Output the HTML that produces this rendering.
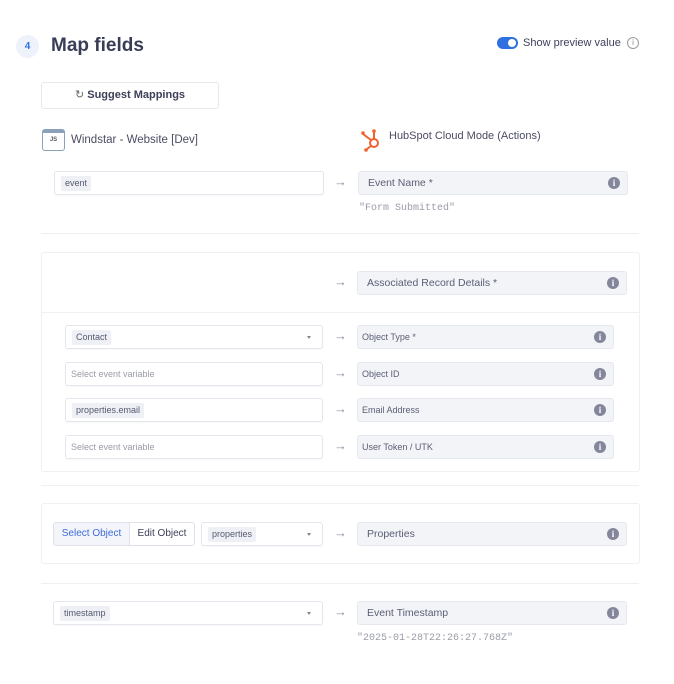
<!DOCTYPE html>
<html><head><style>
*{box-sizing:border-box;margin:0;padding:0}
body{width:674px;height:684px;background:#fff;font-family:"Liberation Sans",sans-serif;color:#3d3f5a;position:relative;overflow:hidden}
.a{position:absolute}
.in{position:absolute;height:24px;border:1px solid #e4e6ed;border-radius:3px;background:#fff;box-shadow:0 1px 1px rgba(0,0,0,.03)}
.tag{position:absolute;left:6px;top:4px;height:15px;line-height:15px;padding:0 4px;background:#eef0f5;border-radius:2px;font-size:9px;color:#555a70}
.ph{position:absolute;left:5px;top:0;line-height:22px;font-size:9px;color:#999ca8}
.rf{position:absolute;height:24px;border:1px solid #e6e8ef;border-radius:3px;background:#f3f4f8;font-size:10.5px;color:#5a5e74;line-height:22px;padding-left:9px}
.rf.s{font-size:9px;padding-left:4px}
.i{position:absolute;right:7px;top:5px;width:12px;height:12px;border-radius:50%;background:#84879b;color:#fff;font-size:9px;font-weight:bold;line-height:12px;text-align:center;font-family:"Liberation Serif",serif}
.ar{position:absolute;font-size:13px;color:#8d90a5;line-height:14px}
.dd{position:absolute;right:11px;top:10px;width:0;height:0;border-left:2.5px solid transparent;border-right:2.5px solid transparent;border-top:3px solid #888}
.hr{position:absolute;left:41px;width:598px;height:1px;background:#eef0f3}
.box{position:absolute;left:41px;width:599px;border:1px solid #eef0f4;border-radius:3px}
.mono{position:absolute;font-family:"Liberation Mono",monospace;font-size:10px;color:#9a9ca8}
</style></head><body>
<div class="a" style="left:16px;top:35px;width:23px;height:23px;border-radius:50%;background:#eef2fb;color:#2f6fe0;font-size:10px;font-weight:bold;text-align:center;line-height:23px">4</div>
<div class="a" style="left:51px;top:35px;font-size:19px;font-weight:bold;color:#3a3d57">Map fields</div>
<div class="a" style="left:497px;top:37px;width:21px;height:12px;border-radius:6px;background:#2f6fe0"><div class="a" style="right:2px;top:2px;width:8px;height:8px;border-radius:50%;background:#fff"></div></div>
<div class="a" style="left:523px;top:37px;font-size:11px;color:#3d3f5a">Show preview value</div>
<div class="a" style="left:627px;top:37px;width:12px;height:12px;border:1px solid #999;border-radius:50%;font-size:8px;color:#888;text-align:center;line-height:10px">i</div>

<div class="a" style="left:41px;top:82px;width:178px;height:27px;border:1px solid #e6e8ee;border-radius:3px;font-size:11px;font-weight:bold;text-align:center;line-height:25px;color:#3d3f5a"><span style="font-weight:normal;color:#666">&#x21BB;</span> Suggest Mappings</div>

<div class="a" style="left:42px;top:129px;width:23px;height:22px;border:1.5px solid #8aa0bb;border-radius:3px;border-top-width:4px;font-size:6px;font-weight:bold;color:#556;text-align:center;line-height:15px">JS</div>
<div class="a" style="left:71px;top:134px;font-size:11.5px;color:#4a4d62">Windstar - Website [Dev]</div>
<svg class="a" style="left:360px;top:127px" width="24" height="25" viewBox="0 0 24 25"><g stroke="#f2622e" stroke-width="2" fill="none"><circle cx="14" cy="16" r="4"/><line x1="14" y1="12" x2="14" y2="5"/><line x1="11" y1="13" x2="3" y2="7"/><line x1="11" y1="19" x2="7" y2="22"/></g><circle cx="14" cy="4" r="1.8" fill="#f2622e"/><circle cx="3" cy="6" r="1.8" fill="#f2622e"/><circle cx="6" cy="23" r="1.8" fill="#f2622e"/></svg>
<div class="a" style="left:389px;top:130px;font-size:11px;color:#4a4d62">HubSpot Cloud Mode (Actions)</div>

<div class="in" style="left:54px;top:171px;width:270px"><span class="tag">event</span></div>
<div class="ar" style="left:334px;top:175px">&#x2192;</div>
<div class="rf" style="left:358px;top:171px;width:270px">Event Name *<span class="i">i</span></div>
<div class="mono" style="left:359px;top:203px">"Form Submitted"</div>

<div class="hr" style="top:233px"></div>
<div class="box" style="top:252px;height:220px"></div>
<div class="hr" style="top:312px;left:42px;width:597px"></div>
<div class="ar" style="left:334px;top:275px">&#x2192;</div>
<div class="rf" style="left:357px;top:271px;width:270px">Associated Record Details *<span class="i">i</span></div>

<div class="in" style="left:65px;top:325px;width:258px"><span class="tag">Contact</span><span class="dd"></span></div>
<div class="ar" style="left:334px;top:329px">&#x2192;</div>
<div class="rf s" style="left:357px;top:325px;width:257px">Object Type *<span class="i">i</span></div>
<div class="in" style="left:65px;top:362px;width:258px"><span class="ph">Select event variable</span></div>
<div class="ar" style="left:334px;top:366px">&#x2192;</div>
<div class="rf s" style="left:357px;top:362px;width:257px">Object ID<span class="i">i</span></div>
<div class="in" style="left:65px;top:398px;width:258px"><span class="tag">properties.email</span></div>
<div class="ar" style="left:334px;top:402px">&#x2192;</div>
<div class="rf s" style="left:357px;top:398px;width:257px">Email Address<span class="i">i</span></div>
<div class="in" style="left:65px;top:435px;width:258px"><span class="ph">Select event variable</span></div>
<div class="ar" style="left:334px;top:439px">&#x2192;</div>
<div class="rf s" style="left:357px;top:435px;width:257px">User Token / UTK<span class="i">i</span></div>

<div class="hr" style="top:485px"></div>
<div class="box" style="top:503px;height:61px"></div>
<div class="a" style="left:53px;top:522px;width:142px;height:24px;border:1px solid #dfe2ea;border-radius:3px;font-size:10px;line-height:22px;overflow:hidden"><span class="a" style="left:0;top:0;width:76px;height:22px;background:#f3f5fa;border-right:1px solid #dfe2ea;color:#3f6ad8;text-align:center">Select Object</span><span class="a" style="left:76px;top:0;width:64px;text-align:center;color:#3d3f5a">Edit Object</span></div>
<div class="in" style="left:201px;top:522px;width:122px"><span class="tag">properties</span><span class="dd"></span></div>
<div class="ar" style="left:334px;top:526px">&#x2192;</div>
<div class="rf" style="left:357px;top:522px;width:270px">Properties<span class="i">i</span></div>

<div class="hr" style="top:583px"></div>
<div class="in" style="left:53px;top:601px;width:270px"><span class="tag">timestamp</span><span class="dd"></span></div>
<div class="ar" style="left:334px;top:605px">&#x2192;</div>
<div class="rf" style="left:357px;top:601px;width:270px">Event Timestamp<span class="i">i</span></div>
<div class="mono" style="left:357px;top:633px">"2025-01-28T22:26:27.768Z"</div>
</body></html>
